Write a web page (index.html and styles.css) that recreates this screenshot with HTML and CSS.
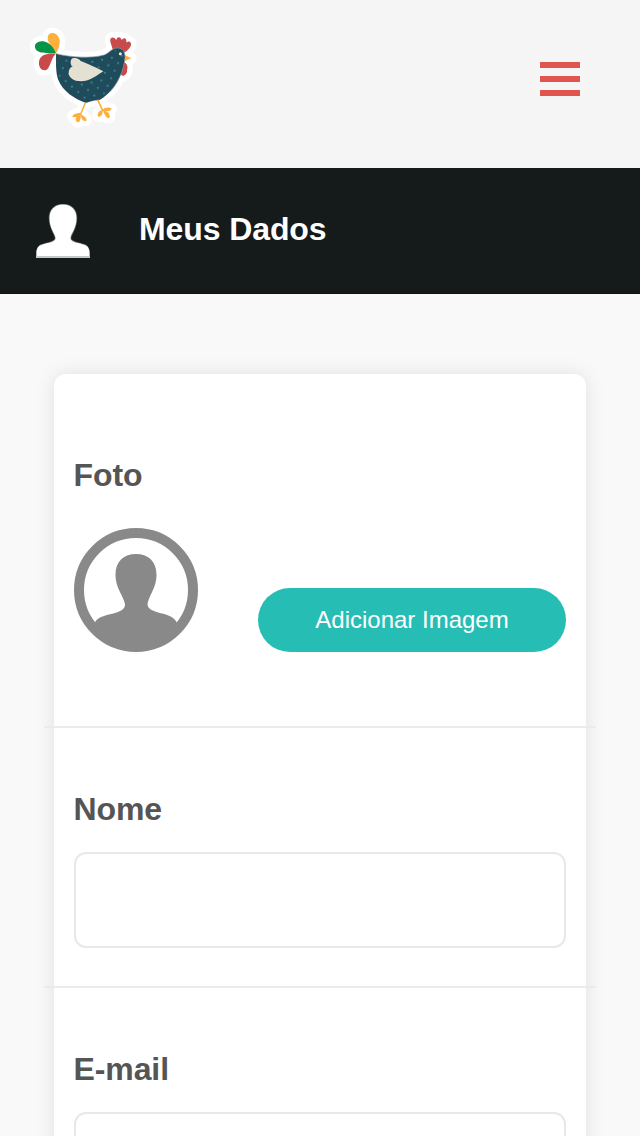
FILE: index.html
```html
<!DOCTYPE html>
<html lang="pt-BR">
<head>
<meta charset="utf-8">
<title>Meus Dados</title>
<link rel="stylesheet" href="styles.css">
</head>
<body>
<header class="topbar">
  <svg class="logo" viewBox="0 0 390 360" role="img" aria-label="Galinha">
    <defs>
      <pattern id="dots" width="30" height="40" patternUnits="userSpaceOnUse" patternTransform="rotate(-12)">
        <circle cx="6" cy="8" r="3" fill="#3a91a6"/>
        <circle cx="21" cy="28" r="3" fill="#3a91a6"/>
      </pattern>
      <g id="shape">
        <path class="yellow" d="M108 100C95 79 83 68 83 54C83 43 91 38 100 39C122 43 126 73 108 100Z"/>
        <path class="green" d="M108 100C90 98 65 102 51 92C45 87 43 79 46 73C54 62 70 61 84 69C96 76 103 88 108 100Z"/>
        <path class="red" d="M108 101C93 111 91 150 75 151C60 151 54 135 58 120C63 104 84 98 108 101Z"/>
        <path class="red" d="M278 88C276 77 269 65 271 57C274 50 283 51 287 58Q288 62 290 57C292 49 302 50 304 58Q305 61 308 57C313 51 321 57 319 65Q319 68 323 65C330 62 336 70 332 78C328 88 321 91 315 97Z"/>
        <path class="red" d="M312 126C321 130 325 143 321 149C323 159 315 168 307 167C301 165 299 157 304 148Z"/>
        <path class="yellow" d="M313 104L334 115L314 124Z"/>
        <path class="blue" d="M108 101C150 112 215 116 252 105C269 99 274 85 292 84C309 84 315 96 315 112C312 151 292 194 269 216C255 229 244 238 236 241C221 240 210 245 198 249C163 237 128 213 115 180C107 158 108 130 108 101Z"/>
        <path class="yellow" d="M182 280C173 278 158 284 157 289C160 295 175 291 182 283ZM180 282C168 287 162 302 173 307C182 307 183 291 182 281ZM182 282C183 297 190 306 199 302C203 294 190 288 182 282ZM247 271C238 270 229 284 235 290C244 292 250 281 247 271ZM248 270C253 261 270 261 275 266C274 273 257 276 248 270ZM249 271C265 275 271 282 269 293C258 297 253 283 249 271Z"/>
      </g>
    </defs>
    <path class="sticker" d="M196 249L182 281M234 241L247 272"/>
    <use href="#shape" class="sticker"/>
    <use href="#shape"/>
    <path class="legs" d="M196 249L182 282M182 281L163 286M234 241L248 272"/>
    <path fill="url(#dots)" d="M113 106C150 117 215 121 252 110C269 104 279 91 291 91C305 91 309 98 309 112C307 148 287 190 265 212C250 225 242 233 235 236C220 235 210 240 198 244C167 232 132 210 119 178C112 158 112 130 113 106Z"/>
    <path class="wing" d="M155 138C150 129 151 119 158 115C168 112 178 117 182 123C202 130 232 145 250 154C232 164 212 184 182 184C162 184 147 174 146 160C146 149 150 142 159 139Z"/>
    <path class="neck" d="M108 101C150 112 215 116 252 105C269 99 274 85 292 84C309 84 315 96 315 112C312 151 292 194 269 216"/>
    <circle class="eye" cx="301" cy="101" r="4.500"/>
  </svg>
  <div class="menu"><span></span><span></span><span></span></div>
</header>
<div class="titlebar">
  <svg class="user" viewBox="0 0 54 54" aria-hidden="true">
    <path class="user-shape" d="M27 .5C35.500 .5 40.500 6 40.500 14C40.500 25 35 29 34.500 34C34 39 46 39 50 41.500C53 43.500 53.500 46 53.500 50V54H.5V50C.5 46 1 43.500 4 41.500C8 39 20 39 19.500 34C19 29 13.500 25 13.500 14C13.500 6 18.500 .5 27 .5Z"/>
    <path fill="#c4c8c7" d="M0 52H54V54H0Z"/>
  </svg>
  <h1>Meus Dados</h1>
</div>
<main>
  <form class="card">
    <section class="group photo">
      <h2>Foto</h2>
      <div class="photo-row">
        <svg class="avatar" viewBox="0 0 124 124" aria-hidden="true">
          <circle cx="62" cy="62" r="57" fill="none" stroke="#898989" stroke-width="10"/>
          <path fill="#898989" d="M21 95C24 84 52 88 51 76C49 67 41.500 60 41.500 47C41.500 33 50 26 62 26C74 26 82.500 33 82.500 47C82.500 60 75 67 73.500 76C73.500 87 99 83 103 95C96 111 81 121 62 121C43 121 28 111 21 95Z"/>
        </svg>
        <button type="button" class="add">Adicionar Imagem</button>
      </div>
    </section>
    <section class="group">
      <h2>Nome</h2>
      <input type="text" aria-label="Nome">
    </section>
    <section class="group last">
      <h2>E-mail</h2>
      <input type="email" aria-label="E-mail">
    </section>
  </form>
</main>
</body>
</html>
```
FILE: styles.css
```css
* { box-sizing: border-box; }
body {
  margin: 0;
  height: 1136px;
  overflow: hidden;
  background: #f9f9f9;
  font-family: "Liberation Sans", Arial, sans-serif;
}
h1, h2 { margin: 0; font-size: 32px; line-height: 37px; font-weight: bold; letter-spacing: -.1px; }
h2 { text-indent: -.5px; }
.topbar {
  display: flex;
  justify-content: space-between;
  align-items: flex-start;
  height: 168px;
  padding: 20px 60px 0 20px;
  background: #f5f5f5;
}
.logo { width: 130px; height: 120px; }
.sticker { stroke: #fff; stroke-width: 32px; stroke-linejoin: round; stroke-linecap: round; }
.yellow { fill: #fdb03b; }
.green { fill: #069447; }
.red { fill: #c84a4a; }
.blue { fill: #1f4b5b; }
.legs { fill: none; stroke: #fdb03b; stroke-width: 5px; stroke-linecap: round; }
.wing { fill: #e4e1d3; }
.neck { fill: none; stroke: #829aa3; stroke-width: 2px; }
.eye { fill: #e4eaec; }
.menu { display: flex; flex-direction: column; gap: 8px; width: 40px; margin-top: 42px; }
.menu span { height: 6px; background: #e0564f; }
.titlebar {
  display: flex;
  align-items: flex-start;
  gap: 47px;
  height: 126px;
  padding: 36px;
  background: #151a1a;
  border-bottom: 1px solid #160f13;
  color: #fff;
}
.user { width: 54px; height: 54px; }
.user-shape { fill: #fff; stroke: rgba(255, 255, 255, .35); stroke-width: 1.5px; }
.titlebar h1 { margin: 7px 0 0 2px; }
main { height: 842px; padding: 80px 54px 0; overflow: hidden; }
.card {
  height: 800px;
  background: #fff;
  border-radius: 12px;
  box-shadow: 0 0 20px rgba(0, 0, 0, .1);
}
.group {
  height: 260px;
  margin: 0 -10px;
  padding: 63px 30px 0;
  border-bottom: 2px solid #ebebeb;
  color: #555;
}
.group.photo { height: 354px; padding-top: 83px; }
.group.last { height: 148px; overflow: hidden; border-bottom: 0; }
.photo-row { display: flex; justify-content: space-between; align-items: flex-end; margin-top: 34px; }
.avatar { width: 124px; height: 124px; }
.add {
  width: 308px;
  height: 64px;
  padding: 0;
  border: 0;
  border-radius: 32px;
  background: #26bdb5;
  color: #fff;
  font: 24px "Liberation Sans", Arial, sans-serif;
}
input {
  display: block;
  width: 100%;
  height: 96px;
  margin-top: 24px;
  border: 2px solid #e6e9ec;
  border-radius: 12px;
  background: #fff;
}
```
